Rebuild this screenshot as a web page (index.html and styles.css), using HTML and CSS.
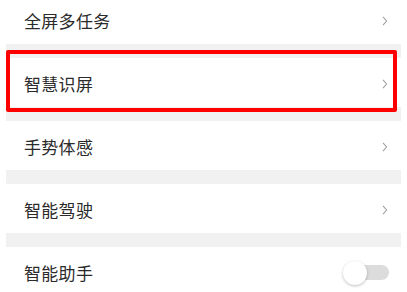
FILE: index.html
```html
<!DOCTYPE html>
<html lang="zh-CN">
<head>
<meta charset="utf-8">
<link rel="stylesheet" href="styles.css">
</head>
<body>
<div class="list">
  <div class="row first"><span class="label">全屏多任务</span><svg class="chev" width="6" height="10" viewBox="0 0 6 10"><path d="M1 0.8 L4.6 5 L1 9.2" fill="none" stroke="#a0a0a0" stroke-width="1.1"/></svg></div>
  <div class="gap"></div>
  <div class="row highlighted"><span class="label">智慧识屏</span><svg class="chev" width="6" height="10" viewBox="0 0 6 10"><path d="M1 0.8 L4.6 5 L1 9.2" fill="none" stroke="#a0a0a0" stroke-width="1.1"/></svg><div class="mark"></div></div>
  <div class="gap"></div>
  <div class="row"><span class="label">手势体感</span><svg class="chev" width="6" height="10" viewBox="0 0 6 10"><path d="M1 0.8 L4.6 5 L1 9.2" fill="none" stroke="#a0a0a0" stroke-width="1.1"/></svg></div>
  <div class="gap"></div>
  <div class="row"><span class="label">智能驾驶</span><svg class="chev" width="6" height="10" viewBox="0 0 6 10"><path d="M1 0.8 L4.6 5 L1 9.2" fill="none" stroke="#a0a0a0" stroke-width="1.1"/></svg></div>
  <div class="gap"></div>
  <div class="row"><span class="label">智能助手</span><div class="switch"><div class="knob"></div></div></div>
</div>
</body>
</html>
```
FILE: styles.css
```css
html, body {
  margin: 0;
  padding: 0;
  background: #ffffff;
  overflow: hidden;
}
.list {
  margin: -5px 6px 0 6px;
  display: flex;
  flex-direction: column;
  font-family: "Noto Sans CJK SC", "Noto Sans", sans-serif;
}
.row {
  position: relative;
  height: 49px;
  display: flex;
  align-items: center;
  justify-content: space-between;
  padding: 2px 14px 0 18px;
  box-sizing: border-box;
  background: #fff;
}
.label {
  font-size: 17px;
  color: #2b2b2b;
  letter-spacing: 0.3px;
}
.chev {
  display: block;
  margin-right: -1px;
}
.gap {
  height: 14px;
  background: #f1f1f1;
}
.mark {
  position: absolute;
  left: 0;
  right: 4px;
  top: -8px;
  bottom: -5px;
  border: 4px solid #ff0000;
  border-radius: 2px;
}
.switch {
  position: relative;
  width: 41px;
  height: 15px;
  border-radius: 8px;
  background: #dcdcdc;
  margin-right: -2px;
}
.knob {
  position: absolute;
  left: -5px;
  top: -4.5px;
  width: 24px;
  height: 24px;
  border-radius: 50%;
  background: #fff;
  box-shadow: 0 1px 3px rgba(0,0,0,0.25);
}
```
